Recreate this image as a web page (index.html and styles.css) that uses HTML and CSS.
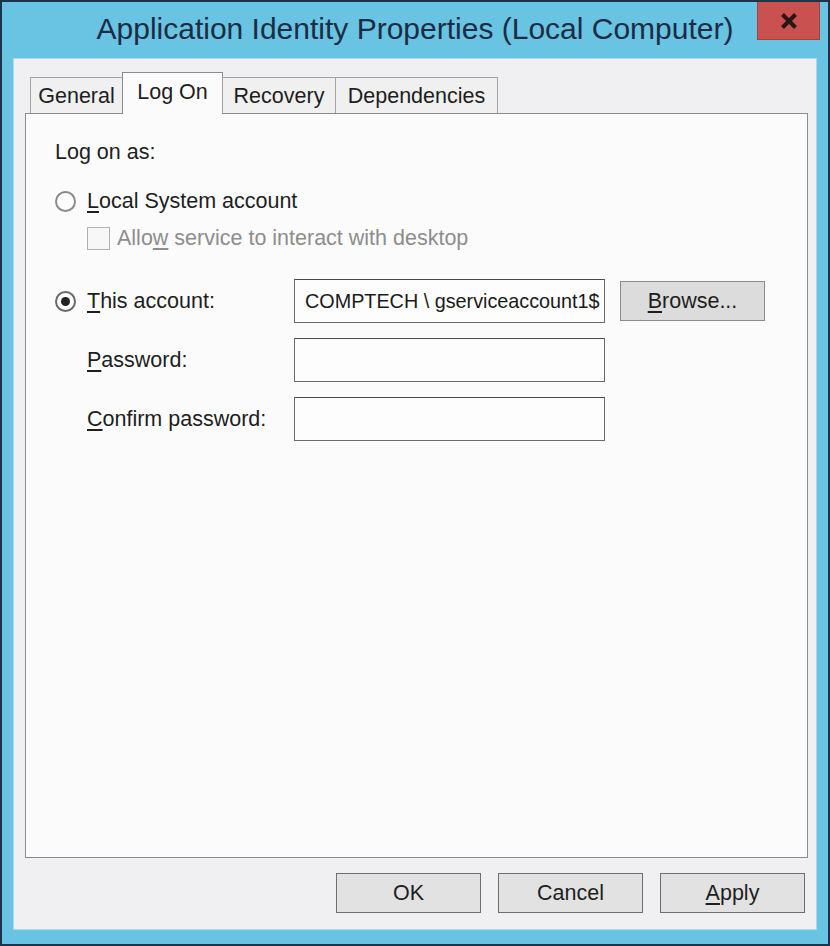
FILE: index.html
```html
<!DOCTYPE html>
<html lang="en">
<head>
<meta charset="utf-8">
<title>Application Identity Properties (Local Computer)</title>
<link rel="stylesheet" href="styles.css">
</head>
<body>
<div class="window">
  <div class="titlebar">
    <div class="title-spacer"></div>
    <div class="title">Application Identity Properties (Local Computer)</div>
    <div class="close-wrap">
      <div class="close">
        <svg width="18" height="16" viewBox="0 0 18 16" aria-hidden="true">
          <path d="M2.5 1.5 L15.5 14.5 M15.5 1.5 L2.5 14.5" stroke="#2b1414" stroke-width="4" stroke-linecap="butt" fill="none"/>
        </svg>
      </div>
    </div>
  </div>
  <div class="client">
    <div class="tabs">
      <div class="tab tab-general">General</div>
      <div class="tab tab-logon active">Log On</div>
      <div class="tab tab-recovery">Recovery</div>
      <div class="tab tab-deps">Dependencies</div>
    </div>
    <div class="panel">
      <div class="logon-as">Log on as:</div>
      <div class="option option-local">
        <span class="radio"></span>
        <span class="opt-label"><u>L</u>ocal System account</span>
      </div>
      <div class="option option-allow">
        <span class="checkbox"></span>
        <span class="opt-label disabled">Allo<u>w</u> service to interact with desktop</span>
      </div>
      <div class="account-grid">
        <span class="radio checked"></span>
        <span class="field-label"><u>T</u>his account:</span>
        <div class="textbox account">COMPTECH \ gserviceaccount1$</div>
        <div class="btn browse"><u>B</u>rowse...</div>

        <span class="cell-empty"></span>
        <span class="field-label"><u>P</u>assword:</span>
        <div class="textbox"></div>
        <span class="cell-empty"></span>

        <span class="cell-empty"></span>
        <span class="field-label"><u>C</u>onfirm password:</span>
        <div class="textbox"></div>
        <span class="cell-empty"></span>
      </div>
    </div>
    <div class="buttons">
      <div class="btn dlg">OK</div>
      <div class="btn dlg">Cancel</div>
      <div class="btn dlg"><u>A</u>pply</div>
    </div>
  </div>
</div>
</body>
</html>
```

FILE: styles.css
```css
* {
  box-sizing: border-box;
}

html, body {
  margin: 0;
  padding: 0;
  background: #69c3e2;
}

body {
  font-family: "Liberation Sans", Arial, sans-serif;
  color: #1e1e1e;
}

.window {
  width: 830px;
  height: 946px;
  border: 2px solid #1b3549;
  background: #69c3e2;
  display: flex;
  flex-direction: column;
}

/* ---------- title bar ---------- */
.titlebar {
  height: 56px;
  display: grid;
  grid-template-columns: 71px 1fr 71px;
  align-items: start;
}

.title {
  padding-top: 9px;
  text-align: center;
  font-size: 30px;
  line-height: 36px;
  color: #1c2c44;
  white-space: nowrap;
}

.close-wrap {
  display: flex;
  justify-content: flex-start;
}

.close {
  width: 63px;
  height: 38px;
  background: #c9514f;
  border: 1px solid #a7413f;
  border-top: none;
  display: flex;
  align-items: center;
  justify-content: center;
}

/* ---------- client area ---------- */
.client {
  flex: 1;
  margin: 0 11px 14px 11px;
  border: 1px solid #a8dbee;
  background: #f0eff1;
  padding: 13px 8px 0 11px;
  display: flex;
  flex-direction: column;
}

.tabs {
  height: 41px;
  margin-left: 5px;
  display: flex;
  align-items: flex-end;
  position: relative;
  z-index: 1;
}

.tab {
  height: 36px;
  border: 1px solid #a3a3a3;
  border-bottom: none;
  background: #f0f0f0;
  font-size: 21.5px;
  line-height: 24px;
  padding-top: 6px;
  text-align: center;
  white-space: nowrap;
  margin-left: -1px;
}

.tab-general {
  width: 93px;
  margin-left: 0;
}

.tab-logon {
  width: 101px;
}

.tab-recovery {
  width: 114px;
}

.tab-deps {
  width: 163px;
}

.tab.active {
  height: 42px;
  margin-bottom: -1px;
  background: #fbfbfb;
  border-color: #8b8b8b;
  padding-top: 7px;
}

.panel {
  height: 745px;
  border: 1px solid #8b8b8b;
  background: #fbfbfb;
  padding: 26px 0 0 29px;
  font-size: 21.5px;
  line-height: 24px;
}

.logon-as {
  height: 24px;
}

.option {
  display: flex;
  align-items: center;
  height: 24px;
}

.option-local {
  margin-top: 25px;
}

.option-allow {
  margin-top: 13px;
  padding-left: 32px;
}

.radio {
  width: 21px;
  height: 21px;
  border-radius: 50%;
  border: 2px solid #8a8a8a;
  background: #fdfdfd;
  display: inline-flex;
  align-items: center;
  justify-content: center;
  flex: none;
}

.radio.checked {
  border-color: #6a6a6a;
}

.radio.checked::after {
  content: "";
  width: 9px;
  height: 9px;
  border-radius: 50%;
  background: #222222;
}

.option-local .opt-label {
  margin-left: 11px;
}

.checkbox {
  width: 23px;
  height: 23px;
  border: 1px solid #b0b0b0;
  background: #f7f7f7;
  flex: none;
}

.option-allow .opt-label {
  margin-left: 7px;
}

.disabled {
  color: #8d8d8d;
}

u {
  text-decoration-thickness: 1.5px;
  text-underline-offset: 3px;
}

.account-grid {
  margin-top: 29px;
  display: grid;
  grid-template-columns: 32px 207px 311px 145px;
  column-gap: 0;
  grid-template-rows: 44px 44px 44px;
  row-gap: 15px;
  align-items: center;
}

.account-grid .radio {
  margin-top: 1px;
}

.field-label {
  white-space: nowrap;
}

.textbox {
  height: 44px;
  border: 1px solid #6a6a6a;
  border-top-color: #4a4a4a;
  background: #fdfdfd;
}

.textbox.account {
  font-size: 19.8px;
  line-height: 42px;
  padding-left: 10px;
  white-space: nowrap;
  overflow: hidden;
  color: #1a1a1a;
}

.btn {
  height: 40px;
  border: 1px solid #6e6e6e;
  background: #e2e2e2;
  text-align: center;
  font-size: 21.5px;
  line-height: 38px;
  color: #1e1e1e;
}

.btn.browse {
  margin-left: 15px;
  width: 145px;
  background: #dcdcdc;
  border-color: #8a8a8a;
}

.buttons {
  margin-top: 15px;
  display: flex;
  justify-content: flex-end;
  gap: 17px;
  padding-right: 3px;
}

.btn.dlg {
  width: 145px;
}
```
